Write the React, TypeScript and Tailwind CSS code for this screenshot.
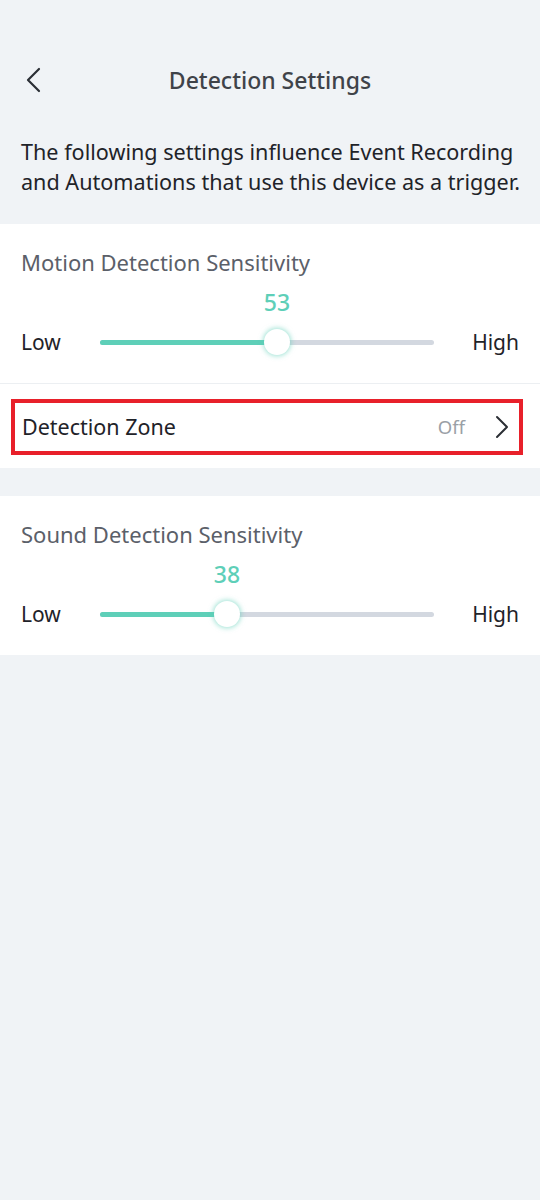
import React from "react";

const font = { fontFamily: '"Noto Sans", "Liberation Sans", sans-serif' };

function Slider({ value }: { value: number }) {
  return (
    <div className="flex items-center h-[40px]">
      <span className="w-[79px] text-[21px] text-[#1f2329] leading-none">Low</span>
      <div className="relative flex-1 h-[5px] rounded-full bg-[#d3d8e0]">
        <div className="absolute left-0 top-0 h-[5px] rounded-full bg-[#5ecfb8]" style={{ width: `${value}%` }} />
        <div
          className="absolute top-1/2 w-[26px] h-[26px] -translate-x-1/2 -translate-y-1/2 rounded-full bg-white shadow-[0_0_5px_1px_rgba(94,207,184,0.6)]"
          style={{ left: `${value}%` }}
        />
      </div>
      <span className="w-[85px] text-right text-[21px] text-[#1f2329] leading-none">High</span>
    </div>
  );
}

function SliderBlock({ title, value }: { title: string; value: number }) {
  return (
    <div className="px-[21px] pt-[26px] pb-[21px]">
      <div className="text-[22px] text-[#5b6069] leading-[24px]">{title}</div>
      <div className="flex mt-[15px]">
        <div className="w-[79px]" />
        <div className="relative flex-1 h-[26px]">
          <span
            className="absolute -translate-x-1/2 text-[23px] font-medium text-[#5ecfb8] leading-[26px]"
            style={{ left: `${value}%` }}
          >
            {value}
          </span>
        </div>
        <div className="w-[85px]" />
      </div>
      <div className="mt-[7px]">
        <Slider value={value} />
      </div>
    </div>
  );
}

export default function App() {
  return (
    <div className="min-h-[1200px] bg-[#f0f3f6] pt-[40px]" style={font}>
      <div className="relative flex items-center justify-center h-[80px]">
        <svg className="absolute left-[24px]" width="20" height="28" viewBox="0 0 20 28" fill="none">
          <path d="M15 3 L4 14 L15 25" stroke="#2b2f35" strokeWidth="2.2" strokeLinecap="round" strokeLinejoin="round" />
        </svg>
        <span className="text-[23px] font-medium text-[#3f4349]">Detection Settings</span>
      </div>
      <div className="pl-[21px] pt-[17px] pb-[27px] text-[21.6px] leading-[30px] text-[#1f2329] whitespace-nowrap">
        The following settings influence Event Recording
        <br />
        and Automations that use this device as a trigger.
      </div>
      <div className="bg-white">
        <SliderBlock title="Motion Detection Sensitivity" value={53} />
        <div className="h-px bg-[#eceff2]" />
        <div className="pl-[11px] pr-[17px] pt-[15px] pb-[13px]">
          <div className="flex items-center h-[56px] border-[4px] border-[#e8202a] pl-[7px] pr-[10px]">
            <span className="flex-1 text-[21.5px] text-[#1f2329]">Detection Zone</span>
            <span className="text-[18.5px] text-[#9aa0a6] mr-[30px]">Off</span>
            <svg width="14" height="24" viewBox="0 0 14 24" fill="none">
              <path d="M2 2 L12 12 L2 22" stroke="#2b2f35" strokeWidth="2" strokeLinecap="round" strokeLinejoin="round" />
            </svg>
          </div>
        </div>
      </div>
      <div className="h-[28px]" />
      <div className="bg-white">
        <SliderBlock title="Sound Detection Sensitivity" value={38} />
      </div>
    </div>
  );
}
